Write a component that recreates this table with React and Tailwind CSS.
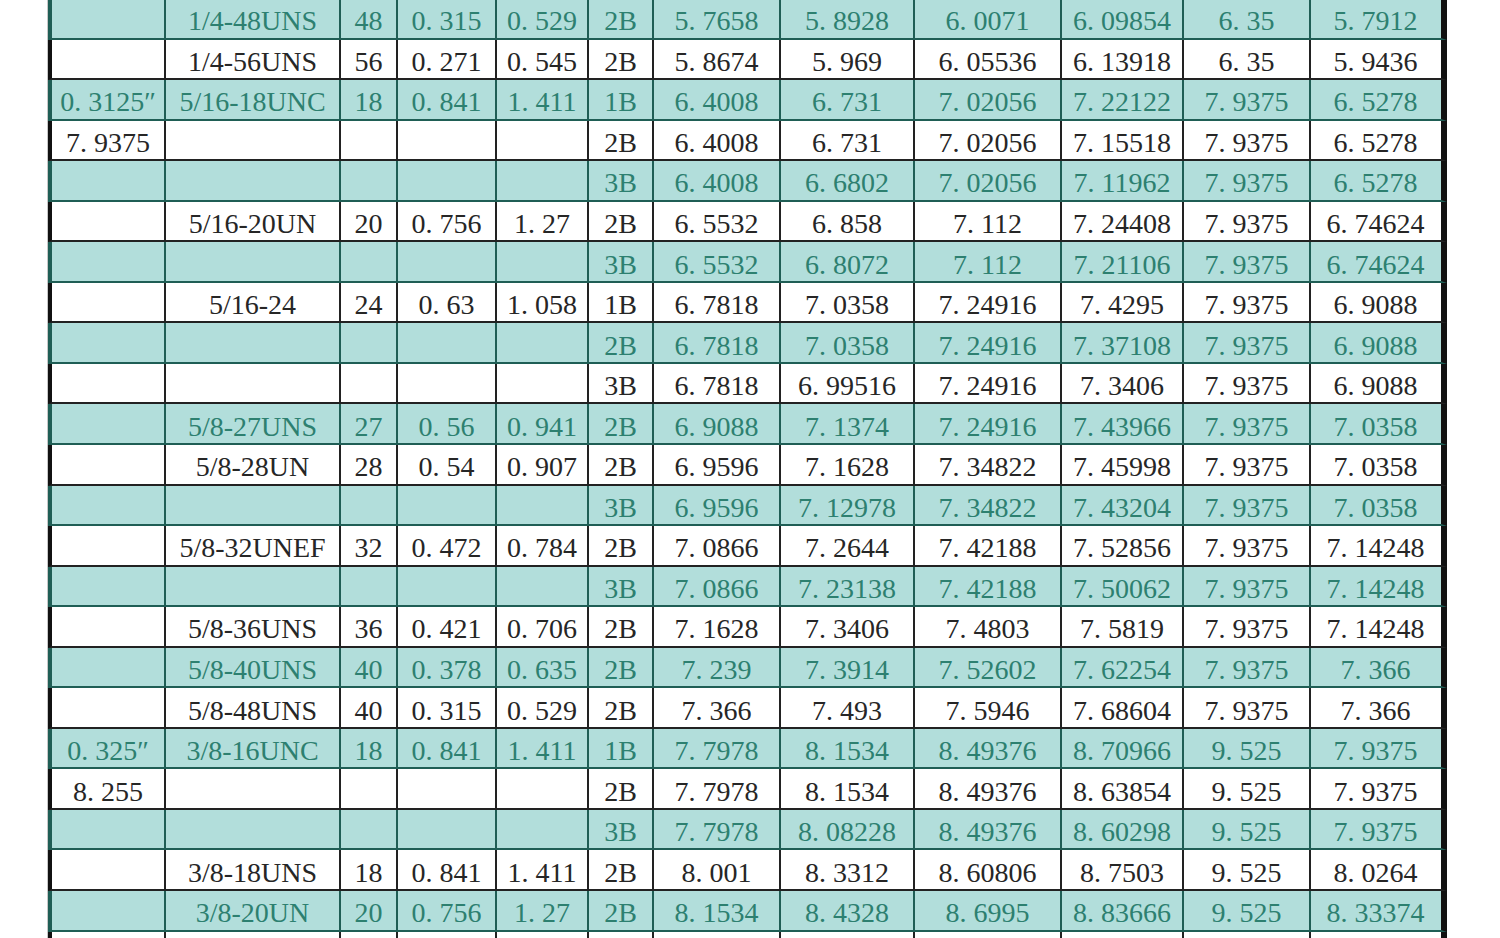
import React from "react";

const W = [
  "w-[114px]",
  "w-[175px]",
  "w-[57px]",
  "w-[99px]",
  "w-[92px]",
  "w-[65px]",
  "w-[127px]",
  "w-[134px]",
  "w-[147px]",
  "w-[122px]",
  "w-[127px]",
  "w-[129px]",
];

const ROWS = [
  ["", "1/4-48UNS", "48", "0.315", "0.529", "2B", "5.7658", "5.8928", "6.0071", "6.09854", "6.35", "5.7912"],
  ["", "1/4-56UNS", "56", "0.271", "0.545", "2B", "5.8674", "5.969", "6.05536", "6.13918", "6.35", "5.9436"],
  ["0.3125″", "5/16-18UNC", "18", "0.841", "1.411", "1B", "6.4008", "6.731", "7.02056", "7.22122", "7.9375", "6.5278"],
  ["7.9375", "", "", "", "", "2B", "6.4008", "6.731", "7.02056", "7.15518", "7.9375", "6.5278"],
  ["", "", "", "", "", "3B", "6.4008", "6.6802", "7.02056", "7.11962", "7.9375", "6.5278"],
  ["", "5/16-20UN", "20", "0.756", "1.27", "2B", "6.5532", "6.858", "7.112", "7.24408", "7.9375", "6.74624"],
  ["", "", "", "", "", "3B", "6.5532", "6.8072", "7.112", "7.21106", "7.9375", "6.74624"],
  ["", "5/16-24", "24", "0.63", "1.058", "1B", "6.7818", "7.0358", "7.24916", "7.4295", "7.9375", "6.9088"],
  ["", "", "", "", "", "2B", "6.7818", "7.0358", "7.24916", "7.37108", "7.9375", "6.9088"],
  ["", "", "", "", "", "3B", "6.7818", "6.99516", "7.24916", "7.3406", "7.9375", "6.9088"],
  ["", "5/8-27UNS", "27", "0.56", "0.941", "2B", "6.9088", "7.1374", "7.24916", "7.43966", "7.9375", "7.0358"],
  ["", "5/8-28UN", "28", "0.54", "0.907", "2B", "6.9596", "7.1628", "7.34822", "7.45998", "7.9375", "7.0358"],
  ["", "", "", "", "", "3B", "6.9596", "7.12978", "7.34822", "7.43204", "7.9375", "7.0358"],
  ["", "5/8-32UNEF", "32", "0.472", "0.784", "2B", "7.0866", "7.2644", "7.42188", "7.52856", "7.9375", "7.14248"],
  ["", "", "", "", "", "3B", "7.0866", "7.23138", "7.42188", "7.50062", "7.9375", "7.14248"],
  ["", "5/8-36UNS", "36", "0.421", "0.706", "2B", "7.1628", "7.3406", "7.4803", "7.5819", "7.9375", "7.14248"],
  ["", "5/8-40UNS", "40", "0.378", "0.635", "2B", "7.239", "7.3914", "7.52602", "7.62254", "7.9375", "7.366"],
  ["", "5/8-48UNS", "40", "0.315", "0.529", "2B", "7.366", "7.493", "7.5946", "7.68604", "7.9375", "7.366"],
  ["0.325″", "3/8-16UNC", "18", "0.841", "1.411", "1B", "7.7978", "8.1534", "8.49376", "8.70966", "9.525", "7.9375"],
  ["8.255", "", "", "", "", "2B", "7.7978", "8.1534", "8.49376", "8.63854", "9.525", "7.9375"],
  ["", "", "", "", "", "3B", "7.7978", "8.08228", "8.49376", "8.60298", "9.525", "7.9375"],
  ["", "3/8-18UNS", "18", "0.841", "1.411", "2B", "8.001", "8.3312", "8.60806", "8.7503", "9.525", "8.0264"],
  ["", "3/8-20UN", "20", "0.756", "1.27", "2B", "8.1534", "8.4328", "8.6995", "8.83666", "9.525", "8.33374"],
  ["", "", "", "", "", "", "", "", "", "", "", ""],
];

function Txt({ s }) {
  const parts = s.split(".");
  if (parts.length === 1) return <>{s}</>;
  return (
    <>
      {parts[0]}
      <span className="tracking-[7px]">.</span>
      {parts.slice(1).join(".")}
    </>
  );
}

function Row({ cells, teal }) {
  const rowCls = teal
    ? "bg-[#b2dedb] border-b-[#1f5e55] border-l-[#1f5e55] text-[#2d8070]"
    : "bg-white border-b-[#222222] border-l-[#111111] text-[#262626]";
  const cellBorder = teal ? "border-[#1f5e55]" : "border-[#222222]";
  return (
    <div
      className={`flex h-[40.55px] border-b-2 border-l-4 border-r-[6px] border-r-[#111111] ${rowCls}`}
    >
      {cells.map((c, i) => (
        <div
          key={i}
          className={`${W[i]} h-full shrink-0 flex items-center justify-center pt-[6px] whitespace-nowrap [font-family:Liberation_Serif,Times_New_Roman,serif] ${
            i < cells.length - 1 ? `border-r-2 ${cellBorder}` : ""
          }`}
        >
          <Txt s={c} />
        </div>
      ))}
    </div>
  );
}

export default function App() {
  return (
    <div className="w-[1500px] h-[938px] overflow-hidden bg-white">
      <div className="ml-[47px] mt-[-1px] border-l border-[#c8c8c8] w-[1400px] font-serif text-[28px] leading-none">
        {ROWS.map((r, i) => (
          <Row key={i} cells={r} teal={i % 2 === 0} />
        ))}
      </div>
    </div>
  );
}
